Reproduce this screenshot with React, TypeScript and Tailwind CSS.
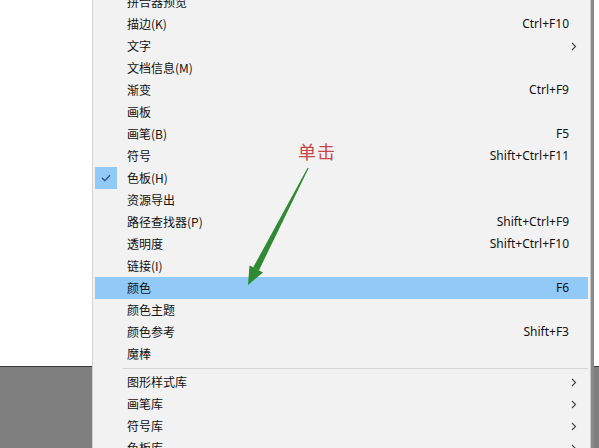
import React from "react";

type Item = { label: string; shortcut?: string; sub?: boolean; checked?: boolean; active?: boolean; sep?: boolean };

const items: Item[] = [
  { label: "拼合器预览" },
  { label: "描边(K)", shortcut: "Ctrl+F10" },
  { label: "文字", sub: true },
  { label: "文档信息(M)" },
  { label: "渐变", shortcut: "Ctrl+F9" },
  { label: "画板" },
  { label: "画笔(B)", shortcut: "F5" },
  { label: "符号", shortcut: "Shift+Ctrl+F11" },
  { label: "色板(H)", checked: true },
  { label: "资源导出" },
  { label: "路径查找器(P)", shortcut: "Shift+Ctrl+F9" },
  { label: "透明度", shortcut: "Shift+Ctrl+F10" },
  { label: "链接(I)" },
  { label: "颜色", shortcut: "F6", active: true },
  { label: "颜色主题" },
  { label: "颜色参考", shortcut: "Shift+F3" },
  { label: "魔棒" },
  { label: "", sep: true },
  { label: "图形样式库", sub: true },
  { label: "画笔库", sub: true },
  { label: "符号库", sub: true },
  { label: "色板库", sub: true },
];

function Chevron() {
  return (
    <svg width="6" height="9" viewBox="0 0 6 9" className="block">
      <path d="M1 1 L4.5 4.5 L1 8" fill="none" stroke="#444" strokeWidth="1.1" />
    </svg>
  );
}

export default function App() {
  return (
    <div className="relative w-[599px] h-[448px] overflow-hidden bg-white" style={{ fontFamily: '"Noto Sans", "Noto Sans CJK SC", sans-serif' }}>
      <div className="flex flex-col h-full">
        <div className="h-[366px] bg-white" />
        <div className="h-px bg-[#3a3a3a]" />
        <div className="flex-1 bg-[#7f7f7f]" />
      </div>

      <div className="absolute left-[92px] top-[-9px] w-[502px] flex">
        <div className="flex-1 bg-[#f2f2f2] border-l border-[#d4d4d4] border-r border-r-[#c8c8c8] px-[2px] flex flex-col">
          {items.map((it, i) =>
            it.sep ? (
              <div key={i} className="h-[6px] flex items-center pl-[28px]">
                <div className="h-px w-full bg-[#d6d6d6]" />
              </div>
            ) : (
              <div
                key={i}
                className={`h-[22px] flex items-center text-[12px] text-[#111] ${it.active ? "bg-[#91c9f7]" : ""}`}
              >
                <div className={`w-[22px] h-[22px] flex items-center justify-center ${it.checked ? "bg-[#91c9f7]" : ""}`}>
                  {it.checked && (
                    <svg width="10" height="8" viewBox="0 0 10 8">
                      <path d="M1 4 L3.8 6.6 L9 1.2" fill="none" stroke="#2f4f7a" strokeWidth="1.3" />
                    </svg>
                  )}
                </div>
                <div className="pl-[10px] flex-1 whitespace-nowrap" style={{ fontFamily: '"Noto Sans CJK SC", sans-serif' }}>{it.label}</div>
                <div className="pr-[19px] whitespace-nowrap">{it.shortcut}</div>
                {it.sub && (
                  <div className="w-[19px] flex justify-start pl-[2px] -ml-[19px]">
                    <Chevron />
                  </div>
                )}
              </div>
            )
          )}
        </div>
        <div className="w-[3px] bg-[#8a8a8a]" />
      </div>

      <div className="absolute left-[298px] top-[142px] text-[18px] leading-none text-[#c9474b] tracking-[1px]" style={{ fontFamily: '"Noto Sans CJK SC", serif' }}>
        单击
      </div>
      <svg className="absolute left-0 top-0" width="599" height="448" viewBox="0 0 599 448">
        <polygon points="307.6,167.8 308.6,168.3 258.9,270.4 253.1,267.6" fill="#2f8a33" />
        <polygon points="248,285 249.5,265.5 263,272.5" fill="#2f8a33" />
      </svg>
    </div>
  );
}
